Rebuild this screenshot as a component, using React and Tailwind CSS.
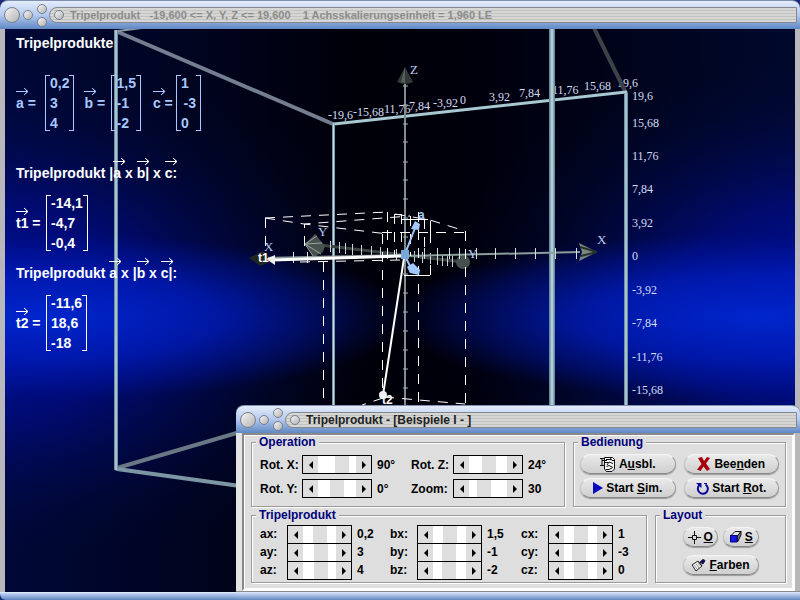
import { useState } from 'react';

const TOP_LABELS = [
  ['-19,6', 328, 119],
  ['-15,68', 353, 116],
  ['11,76', 384, 113],
  ['7,84', 409, 110],
  ['-3,92', 433, 107],
  ['0', 460, 104],
  ['3,92', 489, 101],
  ['7,84', 519, 97],
  ['11,76', 552, 94],
  ['15,68', 584, 90],
  ['19,6', 617, 87],
];

const SIDE_LABELS = [
  ['19,6', 100],
  ['15,68', 127],
  ['11,76', 160],
  ['7,84', 193],
  ['3,92', 227],
  ['0', 260],
  ['-3,92', 294],
  ['-7,84', 327],
  ['-11,76', 361],
  ['-15,68', 394],
];

const Z_TICKS = [86, 105, 124, 142, 162, 180, 199, 218, 237, 274, 293, 312, 331, 350, 369, 388];
const X_TICKS = [293, 307, 424, 437, 449, 459, 476, 495, 515, 535, 555, 576];
const Y_TICKS = [330, 339, 345, 352, 361, 371, 380, 387, 396, 414, 422, 430, 437, 442, 447, 452];

const DASHES = [
  'M265 218 L387 212',
  'M265.5 218 V256',
  'M265 218 L304 224 L388 234',
  'M304.5 246 V224 L410 216',
  'M323.5 262 V405',
  'M382.5 234 V395',
  'M418.5 212 V405',
  'M465.5 231 V404',
  'M387.5 212 V256',
  'M395 214 L430 220 L465 231',
  'M382 232.5 H465',
  'M394.5 214 V256',
  'M401.5 214 V256',
  'M410.5 216 V256',
  'M424.5 219 V256',
  'M300 262 L400 260',
  'M384 397 L465 404',
  'M383 398 L362 405',
];

const Scene = () => (
  <svg
    className="block w-full h-full"
    viewBox="5 29 790 563"
    preserveAspectRatio="xMinYMin slice"
    role="img"
    aria-label="3D coordinate system"
  >
    <defs>
      <radialGradient id="wideLeft" gradientUnits="userSpaceOnUse" cx="0" cy="0" r="1" gradientTransform="translate(-20 312) scale(420 270)">
        <stop offset="0" stopColor="#0010a4" />
        <stop offset="0.4" stopColor="#000c88" stopOpacity="0.75" />
        <stop offset="1" stopColor="#000820" stopOpacity="0" />
      </radialGradient>
      <radialGradient id="wideRight" gradientUnits="userSpaceOnUse" cx="0" cy="0" r="1" gradientTransform="translate(830 312) scale(400 270)">
        <stop offset="0" stopColor="#0010a4" />
        <stop offset="0.4" stopColor="#000c88" stopOpacity="0.75" />
        <stop offset="1" stopColor="#000820" stopOpacity="0" />
      </radialGradient>
      <radialGradient id="beamLeft" gradientUnits="userSpaceOnUse" cx="0" cy="0" r="1" gradientTransform="translate(40 317) scale(370 85)">
        <stop offset="0" stopColor="#0026cc" />
        <stop offset="0.5" stopColor="#001cbc" stopOpacity="0.75" />
        <stop offset="0.8" stopColor="#0016a8" stopOpacity="0.35" />
        <stop offset="1" stopColor="#001090" stopOpacity="0" />
      </radialGradient>
      <radialGradient id="beamRight" gradientUnits="userSpaceOnUse" cx="0" cy="0" r="1" gradientTransform="translate(760 317) scale(370 85)">
        <stop offset="0" stopColor="#0026cc" />
        <stop offset="0.5" stopColor="#001cbc" stopOpacity="0.75" />
        <stop offset="0.8" stopColor="#0016a8" stopOpacity="0.35" />
        <stop offset="1" stopColor="#001090" stopOpacity="0" />
      </radialGradient>
      <linearGradient id="tube">
        <stop offset="0" stopColor="#54788c" />
        <stop offset="0.5" stopColor="#c2dce6" />
        <stop offset="1" stopColor="#54788c" />
      </linearGradient>
      <linearGradient id="base" x1="0" x2="1" y1="0" y2="0">
        <stop offset="0" stopColor="#000838" />
        <stop offset="0.45" stopColor="#000008" />
        <stop offset="0.6" stopColor="#00000c" />
        <stop offset="1" stopColor="#00082c" />
      </linearGradient>
    </defs>

    <rect x="5" y="29" width="790" height="563" fill="url(#base)" />
    <rect x="5" y="29" width="790" height="563" fill="url(#wideLeft)" />
    <rect x="5" y="29" width="790" height="563" fill="url(#wideRight)" />
    <rect x="5" y="29" width="790" height="563" fill="url(#beamLeft)" />
    <rect x="5" y="29" width="790" height="563" fill="url(#beamRight)" />

    {/* Axis scale */}
    <g fill="#d4dcf4" fontFamily="'Liberation Serif', serif" fontSize="12">
      {TOP_LABELS.map(([text, x, y]) => (
        <text key={x} x={x} y={y}>{text}</text>
      ))}
      {SIDE_LABELS.map(([text, y]) => (
        <text key={y} x="632" y={y}>{text}</text>
      ))}
    </g>

    {/* Bounding cube */}
    <g strokeLinecap="round">
      <path d="M118 32 L333 124" stroke="#747e90" strokeWidth="4" />
      <path d="M118 31 L142 28" stroke="#8c9aa4" strokeWidth="2" />
      <path d="M594 28 L625 91" stroke="#3c4246" strokeWidth="4" />
      <path d="M117 468 L240 432" stroke="#687884" strokeWidth="4" />
      <path d="M117 469 L240 486" stroke="#7c96a4" strokeWidth="4" />
      <path d="M334 124 L626 92" stroke="#a8c8d2" strokeWidth="3" />
    </g>
    <rect x="114" y="30" width="4" height="440" fill="url(#tube)" />
    <rect x="332" y="124" width="3" height="300" fill="url(#tube)" />
    <rect x="624" y="93" width="4" height="330" fill="url(#tube)" />
    <rect x="549" y="29" width="6" height="400" fill="url(#tube)" />

    {/* Z axis */}
    <path d="M405 80 V410" stroke="#7c8e90" strokeWidth="2" />
    <path d="M405 67 L397 82 Q405 86 413 82 Z" fill="#303838" />
    <path d="M405 67 L401 82 L405 83 Z" fill="#58605e" />
    {Z_TICKS.map((y) => (
      <path key={y} d={`M403 ${y} h5`} stroke="#a4b4b4" />
    ))}

    {/* Y axis */}
    <path d="M320 245 L463 262" stroke="#3a4442" strokeWidth="3" />
    <circle cx="463" cy="262" r="7" fill="#454f4d" />
    <path d="M305 244 L315 234 L325 246 L323 252 L314 257 Z" fill="#47524e" />
    <path d="M305 244 L317 236 M305 244 L322 243 M305 244 L321 254 M305 244 L313 256" stroke="#98a89e" />
    {Y_TICKS.map((x) => (
      <path key={x} d={`M${x}.5 ${Math.round(246 + (x - 320) * 0.12) - 6} v11`} stroke="#c8d0d0" />
    ))}

    {/* X axis */}
    <path d="M262 258 L405 255" stroke="#8a9898" strokeWidth="2" />
    <path d="M405 256 L580 252" stroke="#8a9c9c" strokeWidth="2" />
    <path d="M597 252 L579 243 L582 252 L579 261 Z" fill="#78887e" />
    <path d="M597 252 L580 247 M597 252 L581 256" stroke="#28302c" strokeWidth="2" />
    {X_TICKS.map((x) => (
      <path key={x} d={`M${x}.5 ${x < 405 ? 252 : 248} v11`} stroke="#d4dcdc" />
    ))}
    <path d="M249 258 L262 251 L268 255 L268 263 L260 266 Z" fill="#202624" />

    {/* Component boxes */}
    <g fill="none" stroke="#fff" strokeWidth="1" strokeDasharray="10 8">
      {DASHES.map((d) => (
        <path key={d} d={d} />
      ))}
    </g>
    <path d="M394 214.5 H402 M404 275.5 H430 M430.5 265 V275 M430.5 221 V243 M402 219.5 H428" fill="none" stroke="#fff" />

    {/* Result vectors */}
    <path d="M402 256 L272 260" stroke="#fff" strokeWidth="3" />
    <path d="M266 259 L275 255 L275 265 Z" fill="#eee" />
    <path d="M404 258 L383 395" stroke="#fff" strokeWidth="2" />
    <circle cx="383" cy="395" r="4" fill="#f0f0f0" />

    {/* Input vectors */}
    <g stroke="#a4c8fc" strokeWidth="2">
      <path d="M405 254 L415 228" />
      <path d="M405 256 L411 268" />
    </g>
    <path d="M411 229 L415 221 L420 224 L419 230 Z" fill="#a4c8fc" />
    <path d="M407 267 L413 263 L420 270 L419 275 L410 273 Z" fill="#a4c8fc" />
    <rect x="401" y="250" width="8" height="9" fill="#78a8d8" />

    <g fill="#b8ccf4" fontFamily="'Liberation Serif', serif" fontSize="13">
      <text x="410" y="74">Z</text>
      <text x="597" y="244">X</text>
      <text x="264" y="251">X</text>
      <text x="318" y="236">Y</text>
      <text x="468" y="258">Y</text>
    </g>
    <g fill="#fff" fontFamily="'Liberation Sans', sans-serif" fontSize="12" fontWeight="bold">
      <text x="258" y="262">t1</text>
      <text x="382" y="404">t2</text>
      <text x="418" y="219" fill="#a4c8fc">a</text>
    </g>
  </svg>
);

const Vec = ({ children }) => (
  <span className="relative inline-block">
    {children}
    <svg className="absolute -top-[6px] left-0 w-[13px] h-[9px]" viewBox="0 0 13 9" fill="none" stroke="currentColor">
      <path d="M0 4.5 H12 M8 1 L12 4.5 L8 8 M9 2 L11.5 4.5 L9 7" />
    </svg>
  </span>
);

const Matrix = ({ rows, className = '' }) => (
  <div className="flex">
    <span className="w-[5px] my-[2px] border-l border-y border-current" />
    <div className={`flex flex-col ${className}`}>
      {rows.map((row) => (
        <span key={row} className={className && row.startsWith('-') ? 'text-right' : ''}>{row}</span>
      ))}
    </div>
    <span className="w-[5px] my-[2px] border-r border-y border-current" />
  </div>
);

const Formulas = () => (
  <div className="absolute top-1 left-[11px] text-white font-bold text-[14px] leading-[20px] font-['Liberation_Sans',sans-serif]">
    <h2>Tripelprodukte</h2>
    <div className="flex items-center mt-5 text-[#a8c8ff]">
      <span className="w-[29px]"><Vec>a</Vec> =</span>
      <Matrix rows={['0,2', '3', '4']} />
      <span className="w-[27px] ml-[10px]"><Vec>b</Vec> =</span>
      <Matrix rows={['1,5', '-1', '-2']} />
      <span className="w-[23px] ml-3"><Vec>c</Vec> =</span>
      <Matrix rows={['1', '-3', '0']} className="w-[15px]" />
    </div>
    <h2 className="mt-[30px]">Tripelprodukt |<Vec>a</Vec> x <Vec>b</Vec>| x <Vec>c</Vec>:</h2>
    <div className="flex items-center mt-[10px]">
      <span className="w-[30px]"><Vec>t1</Vec> =</span>
      <Matrix rows={['-14,1', '-4,7', '-0,4']} />
    </div>
    <h2 className="mt-[10px]">Tripelprodukt <Vec>a</Vec> x |<Vec>b</Vec> x <Vec>c</Vec>|:</h2>
    <div className="flex items-center mt-[10px]">
      <span className="w-[30px]"><Vec>t2</Vec> =</span>
      <Matrix rows={['-11,6', '18,6', '-18']} />
    </div>
  </div>
);

const Orb = ({ className }) => (
  <span className={`block shrink-0 rounded-full border border-[#777f8c] bg-linear-to-br from-[#f4f4f4] to-[#b4b4b4] ${className}`} />
);

const TitleBar = ({ children, className, textClass }) => (
  <div className={`flex items-center pl-1 pr-[3px] rounded-t-lg border-t border-[#8090b0] bg-linear-to-b from-[#e4ecfa] via-[#b4c9ee] to-[#5f88c4] ${className}`}>
    <Orb className="size-4" />
    <Orb className="size-[10px] ml-[3px]" />
    <div className="flex flex-col gap-[3px] ml-1">
      <Orb className="size-[10px]" />
      <Orb className="size-[10px]" />
    </div>
    <div className="flex items-center flex-1 h-4 ml-[2px] pl-1 rounded-l-full border border-[#84888e] bg-[repeating-linear-gradient(#d6d6d4_0_2px,#c2c2c0_2px_3px)]">
      <Orb className="size-[10px]" />
      <h1 className={`ml-[6px] leading-none whitespace-pre font-bold ${textClass}`}>{children}</h1>
    </div>
  </div>
);

const Arrow = ({ left }) => (
  <svg className="w-1 h-2" viewBox="0 0 4 8">
    <path d={left ? 'M4 0 V8 L0 4 Z' : 'M0 0 V8 L4 4 Z'} fill="#000" />
  </svg>
);

const Scroller = ({ id, label, value, min, max, step = 1, unit = '', labelClass, boxClass }) => {
  const [current, setCurrent] = useState(value);
  const move = (delta) => setCurrent(Math.min(max, Math.max(min, current + delta)));

  return (
    <div className="flex items-center">
      <label htmlFor={id} className={labelClass}>{label}</label>
      <div className={`flex border border-black bg-[#dedede] ${boxClass}`}>
        <button type="button" aria-label={`${label} -`} onClick={() => move(-step)} className="w-[15px] flex items-center justify-center">
          <Arrow left />
        </button>
        <input
          id={id}
          type="range"
          min={min}
          max={max}
          step={step}
          value={current}
          onChange={(e) => setCurrent(Number(e.target.value))}
          className="flex-1 min-w-0 h-full appearance-none bg-white [&::-webkit-slider-runnable-track]:h-full [&::-webkit-slider-thumb]:appearance-none [&::-webkit-slider-thumb]:w-[14px] [&::-webkit-slider-thumb]:h-full [&::-webkit-slider-thumb]:bg-[#dedede]"
        />
        <button type="button" aria-label={`${label} +`} onClick={() => move(step)} className="w-[15px] flex items-center justify-center">
          <Arrow />
        </button>
      </div>
      <output htmlFor={id} className="ml-[5px]">
        {String(Math.round(current * 10) / 10).replace('.', ',')}{unit}
      </output>
    </div>
  );
};

const Group = ({ title, className, children }) => (
  <fieldset className={`min-w-0 border border-[#9a9a9a] shadow-[1px_1px_0_#fff,inset_1px_1px_0_#fff] ${className}`}>
    <legend className="ml-1 px-[3px] bg-[#dedede] leading-3 text-[#00007c]">{title}</legend>
    {children}
  </fieldset>
);

const PillButton = ({ className = '', children }) => (
  <button
    type="button"
    className={`flex items-center justify-center gap-[3px] h-5 rounded-full border border-t-[#f4f4f4] border-l-[#c4c4c4] border-r-[#989898] border-b-[#888] bg-linear-to-b from-[#eaeaea] to-[#cfcfcf] shadow-[0_1px_1px_#999] ${className}`}
  >
    {children}
  </button>
);

const HideIcon = () => (
  <svg className="w-4 h-4" viewBox="0 0 16 16" fill="none" stroke="#111">
    <path d="M4.5 1.5 H12.5 L14.5 3.5 V13 L12 15.5 H6.5 L4.5 13 Z" fill="#f4f4f4" />
    <path d="M0 2.5 H4 M2 2.5 V9.5 M0 9.5 H4 M2 4.5 H7 M4 6.5 H8 M6 3.5 H11 M10 1.5 L12 4.5 H14 M7 9 L9 6 L13 7.5 M6.5 10.5 L9 9.5 L13 11.5 M6 13.5 H9 L12 12" />
  </svg>
);

const CrossIcon = () => (
  <svg className="w-[14px] h-[14px]" viewBox="0 0 14 14" fill="#a80008">
    <path d="M1 1 L5 0 L7 4 L10 0 L13 1 L9 6.5 L13 12 L10 14 L6.5 9.5 L3.5 14 L0 12.5 L4.5 7 Z" />
  </svg>
);

const RotateIcon = () => (
  <svg className="w-[13px] h-[13px]" viewBox="0 0 13 13" fill="none" stroke="#08089c" strokeWidth="2">
    <path d="M3.5 3 A5 5 0 1 0 9.5 2.5" />
    <path d="M0 1 H5.5 V6 Z" fill="#08089c" stroke="none" />
    <path d="M8 1.5 H11" strokeWidth="1" />
  </svg>
);

const Dialog = () => (
  <section className="absolute right-0 bottom-0 w-[564px] flex flex-col font-['Liberation_Sans',sans-serif] text-black">
    <TitleBar className="h-[28px]" textClass="text-[12px] text-[#222]">Tripelprodukt - [Beispiele I - ]</TitleBar>
    <div className="pl-[6px] pr-[5px] bg-linear-to-r from-[#e4e4e4] via-[#b0b0b0] to-[#b8b8b8]">
      <div className="border-2 border-t-[#8a8a8a] border-l-[#8a8a8a] border-r-white border-b-white bg-[#dedede]">
        <div className="flex flex-col gap-[2px] pb-[5px] px-[6px] border border-white text-[12px] font-bold leading-4">
          <div className="flex gap-2">
            <Group title="Operation" className="flex-1 h-[71px]">
              <div className="grid grid-cols-[151px_1fr] gap-y-[5px] pt-[7px] pl-2">
                <Scroller id="rotx" label="Rot. X:" value={90} min={-240} max={240} unit="°" labelClass="w-[42px]" boxClass="w-[70px] h-[19px]" />
                <Scroller id="rotz" label="Rot. Z:" value={24} min={-240} max={240} unit="°" labelClass="w-[42px]" boxClass="w-[70px] h-[19px]" />
                <Scroller id="roty" label="Rot. Y:" value={0} min={-240} max={240} unit="°" labelClass="w-[42px]" boxClass="w-[70px] h-[19px]" />
                <Scroller id="zoom" label="Zoom:" value={30} min={0} max={90} labelClass="w-[42px]" boxClass="w-[70px] h-[19px]" />
              </div>
            </Group>
            <Group title="Bedienung" className="w-[213px]">
              <div className="grid grid-cols-2 gap-x-2 gap-y-1 pt-[6px] px-[6px]">
                <PillButton>
                  <HideIcon />
                  <span>A<u>u</u>sbl.</span>
                </PillButton>
                <PillButton>
                  <CrossIcon />
                  <span>Bee<u>n</u>den</span>
                </PillButton>
                <PillButton>
                  <svg className="w-[10px] h-3" viewBox="0 0 10 12"><path d="M0 0 L10 6 L0 12 Z" fill="#0808c0" /></svg>
                  <span>Start <u>S</u>im.</span>
                </PillButton>
                <PillButton>
                  <RotateIcon />
                  <span>Start <u>R</u>ot.</span>
                </PillButton>
              </div>
            </Group>
          </div>

          <div className="flex gap-2">
            <Group title="Tripelprodukt" className="flex-1 h-[74px]">
              <div className="grid grid-cols-[130px_131px_1fr] pt-1 pl-2">
                {[
                  ['ax', 0.2], ['bx', 1.5], ['cx', 1],
                  ['ay', 3], ['by', -1], ['cy', -3],
                  ['az', 4], ['bz', -2], ['cz', 0],
                ].map(([name, value]) => (
                  <Scroller
                    key={name}
                    id={name}
                    label={`${name}:`}
                    value={value}
                    min={-20}
                    max={20}
                    step={0.1}
                    labelClass="w-[27px]"
                    boxClass="w-[65px] h-[19px] -mb-px"
                  />
                ))}
              </div>
            </Group>
            <Group title="Layout" className="w-[131px]">
              <div className="grid grid-cols-2 gap-x-[5px] gap-y-2 w-[76px] mx-auto pt-[6px]">
                <PillButton>
                  <svg className="w-[13px] h-[13px]" viewBox="0 0 13 13" fill="none" stroke="#111">
                    <path d="M6.5 0 V4 M6.5 9 V13 M0 6.5 H4 M9 6.5 H13 M4.5 4.5 H8.5 V8.5 H4.5 Z" />
                  </svg>
                  <u>O</u>
                </PillButton>
                <PillButton>
                  <svg className="w-[13px] h-[12px]" viewBox="0 0 13 12" stroke="#111">
                    <path d="M1.5 5 L6 0.5 H12 L8.5 5 Z" fill="#e4e4e4" />
                    <path d="M8.5 5 L12 0.5 V4 L8.5 11 Z" fill="#777" />
                    <path d="M1.5 4.5 H8 V11 H1.5 Z" fill="#1818e0" stroke="#00008c" />
                  </svg>
                  <u>S</u>
                </PillButton>
                <PillButton className="col-span-2">
                  <svg className="w-[15px] h-[13px]" viewBox="0 0 15 13" fill="none" stroke="#222">
                    <path d="M1 6 L7 2 L11 7 L5 12 Z" fill="#f4f4f4" />
                    <path d="M3 6 L6 10 M5 5 L8 9 M7 4 L9 7" stroke="#999" />
                    <path d="M7 2 L11 7" />
                    <path d="M9 3 L12 5 L14 1.5 L12 0.5 Z" fill="#10104c" stroke="#10104c" />
                  </svg>
                  <span><u>F</u>arben</span>
                </PillButton>
              </div>
            </Group>
          </div>
        </div>
      </div>
    </div>
    <div className="h-[9px] border-t border-[#8a8a8a] bg-linear-to-b from-[#dce8fc] to-[#6288c0]" />
  </section>
);

const App = () => (
  <div className="h-screen bg-[#1c2c78] overflow-hidden">
    <main className="relative h-full flex flex-col font-['Liberation_Sans',sans-serif]">
      <TitleBar className="h-[29px]" textClass="text-[11px] text-[#8c8c8c]">
        {'Tripelprodukt   -19,600 <= X, Y, Z <= 19,600    1 Achsskalierungseinheit = 1,960 LE'}
      </TitleBar>
      <div className="flex-1 min-h-0 px-[5px] bg-[#b8b8bc]">
        <div className="relative h-full overflow-hidden">
          <Scene />
          <Formulas />
        </div>
      </div>
      <div className="h-2 rounded-b-md border-t border-[#dce8fc] bg-linear-to-b from-[#c4d6f6] to-[#5f86c0]" />
      <Dialog />
    </main>
  </div>
);

export default App;
